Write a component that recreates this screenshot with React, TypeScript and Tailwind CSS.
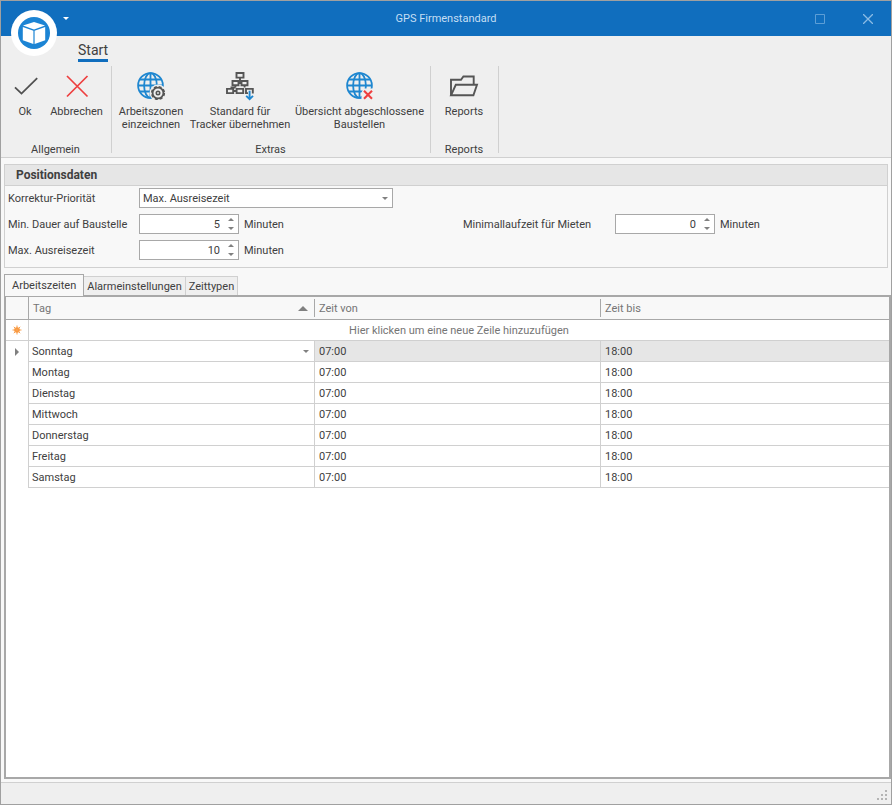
import { useState } from "react";
import type { ReactNode } from "react";
import { clsx } from "clsx";

const DAYS = ["Sonntag", "Montag", "Dienstag", "Mittwoch", "Donnerstag", "Freitag", "Samstag"];

const TABS = ["Arbeitszeiten", "Alarmeinstellungen", "Zeittypen"];

function AppLogo() {
	return (
		<svg width="46" height="46" viewBox="0 0 46 46">
			<circle cx="23" cy="23" r="23" fill="#fff" />
			<circle cx="23" cy="23" r="16" fill="#1c84d4" />
			<path d="M23 12 34 15.5 23 19.6 12 15.5Z" fill="#fff" />
			<path d="M11.8 17 22.4 20.8V34L11.8 30.2Z" fill="#fff" />
			<path d="M34.2 17 23.6 20.8V34L34.2 30.2Z" fill="#fff" />
		</svg>
	);
}

function CheckIcon() {
	return (
		<svg width="32" height="32" viewBox="0 0 32 32" fill="none" stroke="#505050" strokeWidth="1.8">
			<path d="M6 17.3 12.5 23.6 28.2 8.2" />
		</svg>
	);
}

function CancelIcon() {
	return (
		<svg width="32" height="32" viewBox="0 0 32 32" fill="none" stroke="#ee3f3f" strokeWidth="1.7">
			<path d="M6 6 26.5 26.5M26.5 6 6 26.5" />
		</svg>
	);
}

function Globe() {
	return (
		<g fill="none" stroke="#1f87d0" strokeWidth="1.8">
			<circle cx="15.5" cy="15.5" r="12.4" />
			<ellipse cx="15.5" cy="15.5" rx="6.4" ry="12.4" />
			<path d="M15.5 3v25M3 15.5h25M5 9.5h21M5 21.5h21" />
		</g>
	);
}

function GlobeGearIcon() {
	return (
		<svg width="32" height="32" viewBox="0 0 32 32">
			<Globe />
			<circle cx="23" cy="23" r="8.4" fill="#efefef" />
			<circle cx="23" cy="23" r="6.2" fill="none" stroke="#555" strokeWidth="1.8" strokeDasharray="2.9 1.97" />
			<circle cx="23" cy="23" r="5.4" fill="#efefef" stroke="#555" strokeWidth="1.8" />
			<circle cx="23" cy="23" r="1.7" fill="none" stroke="#555" strokeWidth="1.6" />
		</svg>
	);
}

function GlobeCrossIcon() {
	return (
		<svg width="32" height="32" viewBox="0 0 32 32">
			<Globe />
			<path d="M19.5 18.5h10v12h-12v-8Z" fill="#efefef" />
			<path d="M20 20.8 28 28.8M28 20.8 20 28.8" fill="none" stroke="#ee3f3f" strokeWidth="2.1" />
		</svg>
	);
}

function OrgChartIcon() {
	return (
		<svg width="32" height="32" viewBox="0 0 32 32" fill="none" stroke="#555" strokeWidth="1.9">
			<path d="M12.5 3h7v4.6h-7zM8.5 11h6v4.2h-6zM17.5 11h6v4.2h-6zM3 18.9h6.2v4.2H3zM12.6 18.9h6.6v4.2h-6.6z" />
			<path d="M16 8v5M14.4 13h3.2M11.4 15.5v2M20.6 15.5v2M6.5 17.5h5M9.3 21h3.3M24 23.1h-2v-4.2h6.8v4.6" />
			<path d="M25.6 20.8v8.2M22.2 25.8l3.4 3.4 3.4-3.4" stroke="#1f87d0" />
		</svg>
	);
}

function FolderIcon() {
	return (
		<svg width="32" height="32" viewBox="0 0 32 32" fill="none" stroke="#555" strokeWidth="1.9">
			<path d="M3 25.3V9.7h10l2.4-3.2h10.3v8.3" />
			<path d="M3 25.3 7.8 14.8h21.2L25.4 25.3Z" />
		</svg>
	);
}

function Arrow({ up = false, large = false }: { up?: boolean; large?: boolean }) {
	if (large) {
		return (
			<svg width="10" height="5" viewBox="0 0 10 5" fill="#808080">
				<path d="M0 5 5 0 10 5Z" />
			</svg>
		);
	}
	return (
		<svg width="6" height="3" viewBox="0 0 6 3" fill="#808080">
			{up ? <path d="M0 3 3 0 6 3Z" /> : <path d="M0 0 3 3 6 0Z" />}
		</svg>
	);
}

function NewRowIcon() {
	return (
		<svg width="10" height="10" viewBox="0 0 10 10" className="mx-auto">
			<circle cx="5" cy="5" r="2.8" fill="#f9912f" />
			<path d="M5 .5v9M.5 5h9M1.8 1.8l6.4 6.4M8.2 1.8 1.8 8.2" stroke="#f9a04f" />
		</svg>
	);
}

function RibbonGroup({ caption, children }: { caption: string; children: ReactNode }) {
	return (
		<section className="flex flex-col justify-between border-r border-[#d0d0d0] pl-[3px] pr-1">
			<div className="flex items-start">{children}</div>
			<div className="text-center leading-[6px]">{caption}</div>
		</section>
	);
}

function RibbonButton({ icon, className, children }: { icon: ReactNode; className: string; children: ReactNode }) {
	return (
		<button
			type="button"
			className={clsx("flex flex-col items-center whitespace-nowrap pt-1 leading-[13px] hover:bg-[#e0e0e0]", className)}
		>
			{icon}
			<span className="mt-[3px] block">{children}</span>
		</button>
	);
}

interface MinutesFieldProps {
	id: string;
	label: string;
	initial: number;
	labelClass: string;
}

function MinutesField({ id, label, initial, labelClass }: MinutesFieldProps) {
	const [value, setValue] = useState(initial);

	return (
		<div className="flex h-5 items-center">
			<label htmlFor={id} className={clsx("shrink-0 whitespace-nowrap pt-[2px]", labelClass)}>
				{label}
			</label>
			<div className="flex h-5 w-[100px] shrink-0 border border-[#a8a8a8] bg-white">
				<input
					id={id}
					type="text"
					inputMode="numeric"
					value={value}
					onChange={(e) => setValue(Number(e.target.value) || 0)}
					className="w-0 min-w-0 flex-1 pr-[3px] pt-[2px] text-right outline-none"
				/>
				<div className="flex w-[15px] flex-col">
					<button
						type="button"
						aria-label={`${label} erhöhen`}
						onClick={() => setValue(value + 1)}
						className="flex flex-1 items-center justify-center"
					>
						<Arrow up />
					</button>
					<button
						type="button"
						aria-label={`${label} verringern`}
						onClick={() => setValue(Math.max(0, value - 1))}
						className="flex flex-1 items-center justify-center"
					>
						<Arrow />
					</button>
				</div>
			</div>
			<span className="ml-[5px] pt-[2px]">Minuten</span>
		</div>
	);
}

function HeaderCell({ label, last = false, sorted = false }: { label: string; last?: boolean; sorted?: boolean }) {
	return (
		<th className="h-[23px] border-b border-[#a8a8a8] p-0 text-left font-normal">
			<div
				className={clsx(
					"flex h-[18px] items-center justify-between pl-1 pr-[6px]",
					!last && "border-r border-[#a8a8a8]",
				)}
			>
				<span className="pt-[2px]">{label}</span>
				{sorted && <Arrow large />}
			</div>
		</th>
	);
}

export default function App() {
	const [tab, setTab] = useState(TABS[0]);
	const [day, setDay] = useState(DAYS[0]);

	return (
		<div className="flex min-h-screen flex-col border border-[#a0a0a0] bg-[#f8f8f8] font-['Roboto','DejaVu_Sans_Condensed',sans-serif] text-[11px] leading-[14px] text-[#404040]">
			{/* Title bar */}
			<header className="relative flex h-[35px] shrink-0 items-center bg-[#106ebe] text-[#c5dff4]">
				<button type="button" aria-label="Menü" className="absolute left-[10px] top-[9px] z-10">
					<AppLogo />
				</button>
				<div className="flex w-[84px] pl-[62px]">
					<button type="button" aria-label="Schnellzugriff anpassen" className="text-white">
						<svg width="6" height="3" viewBox="0 0 6 3" fill="currentColor">
							<path d="M0 0 3 3 6 0Z" />
						</svg>
					</button>
				</div>
				<h1 className="flex-1 text-center">GPS Firmenstandard</h1>
				<div className="flex w-[84px] justify-end gap-[38px] pr-[18px] text-[#8bbbe4]">
					<button type="button" aria-label="Maximieren">
						<svg width="10" height="10" viewBox="0 0 10 10" fill="none" stroke="#5c9ed6">
							<path d="M.5.5h9v9h-9z" />
						</svg>
					</button>
					<button type="button" aria-label="Schließen">
						<svg width="10" height="10" viewBox="0 0 10 10" fill="none" stroke="currentColor" strokeWidth="1.3">
							<path d="M0 0 10 10M10 0 0 10" />
						</svg>
					</button>
				</div>
			</header>

			{/* Ribbon */}
			<nav className="shrink-0 border-b border-[#d0d0d0] bg-[#efefef]">
				<div className="flex h-[30px] items-start pl-[77px] pt-[6px]">
					<button type="button" className="border-b-[3px] border-[#106ebe] text-sm leading-[17px]">
						Start
					</button>
				</div>
				<div className="mb-[4px] flex h-[87px]">
					<RibbonGroup caption="Allgemein">
						<RibbonButton className="w-[42px]" icon={<CheckIcon />}>
							Ok
						</RibbonButton>
						<RibbonButton className="w-[61px]" icon={<CancelIcon />}>
							Abbrechen
						</RibbonButton>
					</RibbonGroup>
					<RibbonGroup caption="Extras">
						<RibbonButton className="w-[72px]" icon={<GlobeGearIcon />}>
							Arbeitszonen
							<br />
							einzeichnen
						</RibbonButton>
						<RibbonButton className="w-[106px]" icon={<OrgChartIcon />}>
							Standard für
							<br />
							Tracker übernehmen
						</RibbonButton>
						<RibbonButton className="w-[133px]" icon={<GlobeCrossIcon />}>
							Übersicht abgeschlossene
							<br />
							Baustellen
						</RibbonButton>
					</RibbonGroup>
					<RibbonGroup caption="Reports">
						<RibbonButton className="w-[60px]" icon={<FolderIcon />}>
							Reports
						</RibbonButton>
					</RibbonGroup>
				</div>
			</nav>

			{/* Position data */}
			<section className="mx-[3px] mt-[6px] shrink-0 border border-[#d0d0d0]">
				<h2 className="border-b border-[#d0d0d0] bg-[#e6e6e6] px-[11px] py-[3px] text-xs font-bold leading-[14px]">
					Positionsdaten
				</h2>
				<div className="grid grid-cols-[455px_1fr] gap-y-[6px] px-[3px] pb-[7px] pt-[2px]">
					<div className="col-span-2 flex h-5 items-center">
						<label htmlFor="prioritaet" className="w-[131px] pt-[2px]">
							Korrektur-Priorität
						</label>
						<div className="relative h-5 w-[254px]">
							<select
								id="prioritaet"
								className="h-5 w-full appearance-none border border-[#a8a8a8] bg-white px-[3px] pt-[2px] outline-none"
							>
								<option>Max. Ausreisezeit</option>
							</select>
							<span className="pointer-events-none absolute right-[5px] top-[9px]">
								<Arrow />
							</span>
						</div>
					</div>
					<MinutesField id="dauer" label="Min. Dauer auf Baustelle" initial={5} labelClass="w-[131px]" />
					<MinutesField id="laufzeit" label="Minimallaufzeit für Mieten" initial={0} labelClass="w-[152px]" />
					<MinutesField id="ausreise" label="Max. Ausreisezeit" initial={10} labelClass="w-[131px]" />
				</div>
			</section>

			{/* Tabs */}
			<div role="tablist" className="ml-[3px] mt-[6px] flex h-[21px] shrink-0 items-end">
				{TABS.map((item) => (
					<button
						key={item}
						type="button"
						role="tab"
						aria-selected={tab === item}
						onClick={() => setTab(item)}
						className={clsx(
							"whitespace-nowrap",
							tab === item
								? "relative z-10 -mb-px h-[22px] border border-b-0 border-[#a8a8a8] bg-[#f8f8f8] px-[7px]"
								: "h-[19px] border border-b-0 border-l-0 border-[#d0d0d0] bg-[#efefef] px-[3px] pt-[2px]",
						)}
					>
						{item}
					</button>
				))}
			</div>

			<main className="ml-[3px] flex-1 border-2 border-[#a8a8a8] bg-white">
				<table className="w-full table-fixed border-separate border-spacing-0">
					<colgroup>
						<col className="w-[23px]" />
						<col className="w-[286px]" />
						<col className="w-[286px]" />
						<col />
					</colgroup>
					<thead className="bg-[#f8f8f8] text-[#757575]">
						<tr>
							<th aria-label="Zeile" className="border-b border-r border-[#a8a8a8] p-0" />
							<HeaderCell label="Tag" sorted />
							<HeaderCell label="Zeit von" />
							<HeaderCell label="Zeit bis" last />
						</tr>
					</thead>
					<tbody>
						<tr className="text-[#757575]">
							<td className="h-[21px] border-b border-r border-[#d0d0d0] p-0">
								<NewRowIcon />
							</td>
							<td colSpan={3} className="border-b border-[#d0d0d0] p-0 pt-[2px] text-center">
								Hier klicken um eine neue Zeile hinzuzufügen
							</td>
						</tr>
						{DAYS.map((name, i) => (
							<tr key={name}>
								<td className="h-[21px] border-r border-[#d0d0d0] p-0">
									{i === 0 && (
										<svg width="4" height="8" viewBox="0 0 4 8" className="mx-auto" fill="#808080">
											<path d="M0 0 4 4 0 8Z" />
										</svg>
									)}
								</td>
								<td className="border-b border-r border-[#d0d0d0] p-0">
									{i === 0 ? (
										<div className="relative">
											<select
												aria-label="Tag"
												value={day}
												onChange={(e) => setDay(e.target.value)}
												className="block h-5 w-full appearance-none bg-white pl-[3px] pt-[2px] outline-none"
											>
												{DAYS.map((option) => (
													<option key={option}>{option}</option>
												))}
											</select>
											<span className="pointer-events-none absolute right-[5px] top-[9px]">
												<Arrow />
											</span>
										</div>
									) : (
										<div className="pl-[3px] pt-[2px]">{name}</div>
									)}
								</td>
								<td
									className={clsx(
										"border-b border-r border-[#d0d0d0] p-0 pl-1 pt-[2px]",
										i === 0 && "bg-[#e6e6e6]",
									)}
								>
									07:00
								</td>
								<td className={clsx("border-b border-[#d0d0d0] p-0 pl-1 pt-[2px]", i === 0 && "bg-[#e6e6e6]")}>
									18:00
								</td>
							</tr>
						))}
					</tbody>
				</table>
			</main>

			{/* Status bar */}
			<footer className="mt-[3px] flex h-[22px] shrink-0 items-end justify-end border-t border-[#d0d0d0] bg-[#efefef] pb-1 pr-1">
				<svg width="10" height="10" viewBox="0 0 10 10" fill="#b4b4b4">
					<path d="M8 0h2v2h-2zM4 4h2v2h-2zM8 4h2v2h-2zM0 8h2v2h-2zM4 8h2v2h-2zM8 8h2v2h-2z" />
				</svg>
			</footer>
		</div>
	);
}
